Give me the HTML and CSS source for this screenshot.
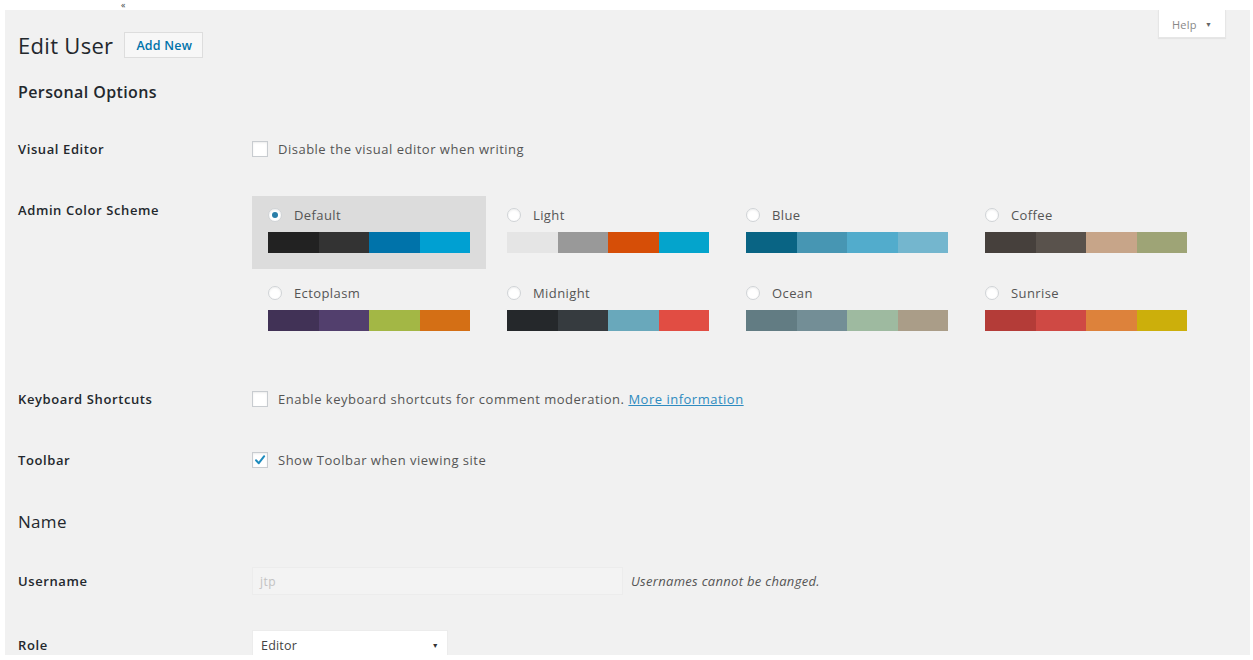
FILE: index.html
```html
<!DOCTYPE html>
<html lang="en">
<head>
<meta charset="utf-8">
<title>Edit User</title>
<link rel="stylesheet" href="styles.css">
</head>
<body>
<div class="topstrip"><span class="crumb">«</span></div>
<div class="wrap">
  <a class="help-tab" href="#">Help <span class="caret">▼</span></a>

  <h1 class="page-title">Edit User <a class="add-new" href="#">Add New</a></h1>

  <h2 class="section-title first">Personal Options</h2>

  <div class="row row-visual">
    <div class="label">Visual Editor</div>
    <label class="field check"><span class="box"></span>Disable the visual editor when writing</label>
  </div>

  <div class="row row-scheme">
    <div class="label">Admin Color Scheme</div>
    <div class="schemes">
      <div class="scheme selected">
        <div class="scheme-name"><span class="radio on"></span>Default</div>
        <div class="palette"><span style="background:#222"></span><span style="background:#333"></span><span style="background:#0073aa"></span><span style="background:#00a0d2"></span></div>
      </div>
      <div class="scheme">
        <div class="scheme-name"><span class="radio"></span>Light</div>
        <div class="palette"><span style="background:#e5e5e5"></span><span style="background:#999"></span><span style="background:#d64e07"></span><span style="background:#04a4cc"></span></div>
      </div>
      <div class="scheme">
        <div class="scheme-name"><span class="radio"></span>Blue</div>
        <div class="palette"><span style="background:#096484"></span><span style="background:#4796b3"></span><span style="background:#52accc"></span><span style="background:#74b6ce"></span></div>
      </div>
      <div class="scheme">
        <div class="scheme-name"><span class="radio"></span>Coffee</div>
        <div class="palette"><span style="background:#46403c"></span><span style="background:#59524c"></span><span style="background:#c7a589"></span><span style="background:#9ea476"></span></div>
      </div>
      <div class="scheme">
        <div class="scheme-name"><span class="radio"></span>Ectoplasm</div>
        <div class="palette"><span style="background:#413256"></span><span style="background:#523f6d"></span><span style="background:#a3b745"></span><span style="background:#d46f15"></span></div>
      </div>
      <div class="scheme">
        <div class="scheme-name"><span class="radio"></span>Midnight</div>
        <div class="palette"><span style="background:#25282b"></span><span style="background:#363b3f"></span><span style="background:#69a8bb"></span><span style="background:#e14d43"></span></div>
      </div>
      <div class="scheme">
        <div class="scheme-name"><span class="radio"></span>Ocean</div>
        <div class="palette"><span style="background:#627c83"></span><span style="background:#738e96"></span><span style="background:#9ebaa0"></span><span style="background:#aa9d88"></span></div>
      </div>
      <div class="scheme">
        <div class="scheme-name"><span class="radio"></span>Sunrise</div>
        <div class="palette"><span style="background:#b43c38"></span><span style="background:#cf4944"></span><span style="background:#dd823b"></span><span style="background:#ccaf0b"></span></div>
      </div>
    </div>
  </div>

  <div class="row row-keys">
    <div class="label">Keyboard Shortcuts</div>
    <label class="field check"><span class="box"></span>Enable keyboard shortcuts for comment moderation.&nbsp;<a class="more" href="#">More information</a></label>
  </div>

  <div class="row row-toolbar">
    <div class="label">Toolbar</div>
    <label class="field check"><span class="box checked"><svg viewBox="0 0 16 16" width="16" height="16"><path d="M4 8.3 L6.8 11.2 L12.2 4.2" fill="none" stroke="#1e8cbe" stroke-width="2" stroke-linecap="round" stroke-linejoin="round"/></svg></span>Show Toolbar when viewing site</label>
  </div>

  <h2 class="section-title name">Name</h2>

  <div class="row row-user">
    <div class="label">Username</div>
    <div class="field"><span class="text-input">jtp</span><span class="desc">Usernames cannot be changed.</span></div>
  </div>

  <div class="row row-role">
    <div class="label">Role</div>
    <div class="field"><span class="select">Editor<span class="arrow">▼</span></span></div>
  </div>
</div>
</body>
</html>
```

FILE: styles.css
```css
html, body {
  margin: 0;
  padding: 0;
  background: #fff;
}

body {
  font-family: "Open Sans", "Noto Sans", sans-serif;
  color: #444;
  font-size: 13px;
  overflow: hidden;
}

.topstrip {
  height: 10px;
  padding-left: 121px;
}

.crumb {
  display: block;
  font-size: 9px;
  line-height: 10px;
  height: 10px;
  color: #3a3f44;
}

.wrap {
  position: relative;
  margin-left: 5px;
  width: 1245px;
  height: 645px;
  background: #f1f1f1;
  padding-left: 13px;
  box-sizing: border-box;
  overflow: hidden;
}

/* Help tab hanging from the top edge */
.help-tab {
  position: absolute;
  top: 0;
  right: 24px;
  width: 68px;
  height: 28px;
  box-sizing: border-box;
  background: #fff;
  border: 1px solid #e6e6e6;
  border-top: none;
  box-shadow: 0 1px 1px rgba(0,0,0,0.05);
  color: #888;
  font-size: 11px;
  text-decoration: none;
  display: flex;
  align-items: center;
  justify-content: center;
  gap: 8px;
  padding-top: 1px;
  letter-spacing: 0.3px;
}

.help-tab .caret {
  font-size: 7px;
  color: #666;
}

.page-title {
  margin: 0;
  padding-top: 21px;
  height: 28px;
  display: flex;
  align-items: center;
  font-weight: 400;
  font-size: 22px;
  color: #23282d;
  letter-spacing: 0.3px;
}

.add-new {
  margin-left: 11px;
  height: 26px;
  box-sizing: border-box;
  padding: 0 10px 0 11px;
  border: 1px solid #ddd;
  background: #f7f7f7;
  color: #0073aa;
  font-size: 12.5px;
  font-weight: 600;
  text-decoration: none;
  display: flex;
  align-items: center;
  letter-spacing: 0.2px;
}

.section-title {
  margin: 0;
  height: 22px;
  display: flex;
  align-items: center;
  font-weight: 600;
  font-size: 16px;
  color: #23282d;
  letter-spacing: 0.4px;
}

.section-title.first {
  margin-top: 22px;
}

.section-title.name {
  margin-top: 26px;
  font-weight: 400;
  font-size: 17px;
  letter-spacing: 0.3px;
}

.row {
  display: grid;
  grid-template-columns: 234px 1fr;
  align-items: center;
}

.label {
  font-weight: 600;
  color: #23282d;
  font-size: 13px;
  letter-spacing: 0.6px;
}

.field {
  display: flex;
  align-items: center;
  color: #555;
  letter-spacing: 0.5px;
}

.row-visual {
  height: 92px;
}

.row-scheme {
  align-items: start;
}

.row-scheme .label {
  padding-top: 6px;
}

.row-keys {
  margin-top: 28px;
  height: 48px;
}

.row-toolbar {
  margin-top: 13px;
  height: 48px;
}

.row-user {
  margin-top: 30px;
  height: 38px;
}

.row-role {
  margin-top: 30px;
  align-items: start;
}

.row-role .label {
  padding-top: 6px;
}

/* Checkbox */
.box {
  width: 16px;
  height: 16px;
  box-sizing: border-box;
  border: 1px solid #c8ccd0;
  background: #fff;
  box-shadow: inset 0 1px 2px rgba(0,0,0,0.08);
  margin-right: 10px;
  position: relative;
  flex: none;
}

.box svg {
  position: absolute;
  left: -1px;
  top: -1px;
}

.more {
  color: #2e8bc0;
  text-decoration: underline;
}

/* Color schemes */
.schemes {
  display: grid;
  grid-template-columns: repeat(4, 234px);
  column-gap: 5px;
  row-gap: 5px;
  margin-top: 1px;
}

.scheme {
  height: 73px;
  box-sizing: border-box;
  padding: 11px 16px 0;
}

.scheme.selected {
  background: #dcdcdc;
}

.scheme-name {
  display: flex;
  align-items: center;
  height: 16px;
  color: #555;
  letter-spacing: 0.4px;
}

.radio {
  width: 14px;
  height: 14px;
  box-sizing: border-box;
  border-radius: 50%;
  border: 1px solid #d0d3d6;
  background: #fff;
  box-shadow: inset 0 1px 2px rgba(0,0,0,0.07);
  margin-right: 12px;
  position: relative;
  flex: none;
}

.radio.on::after {
  content: "";
  position: absolute;
  left: 3px;
  top: 3px;
  width: 6px;
  height: 6px;
  border-radius: 50%;
  background: #2a7ea8;
}

.palette {
  display: flex;
  margin-top: 9px;
  width: 202px;
  height: 21px;
}

.palette span {
  flex: 1;
}

/* Username and role */
.text-input {
  width: 371px;
  height: 28px;
  box-sizing: border-box;
  border: 1px solid #ececec;
  background: #f3f3f3;
  color: #c2c2c2;
  padding-left: 7px;
  display: flex;
  align-items: center;
  font-size: 12px;
}

.desc {
  margin-left: 8px;
  font-style: italic;
  color: #555;
  font-size: 13px;
  letter-spacing: 0.3px;
}

.select {
  width: 196px;
  height: 30px;
  box-sizing: border-box;
  background: #fff;
  border: 1px solid #ececec;
  padding: 0 8px;
  display: flex;
  align-items: center;
  justify-content: space-between;
  color: #444;
  font-size: 12.5px;
  letter-spacing: 0.2px;
}

.select .arrow {
  font-size: 7px;
  color: #333;
}
```
